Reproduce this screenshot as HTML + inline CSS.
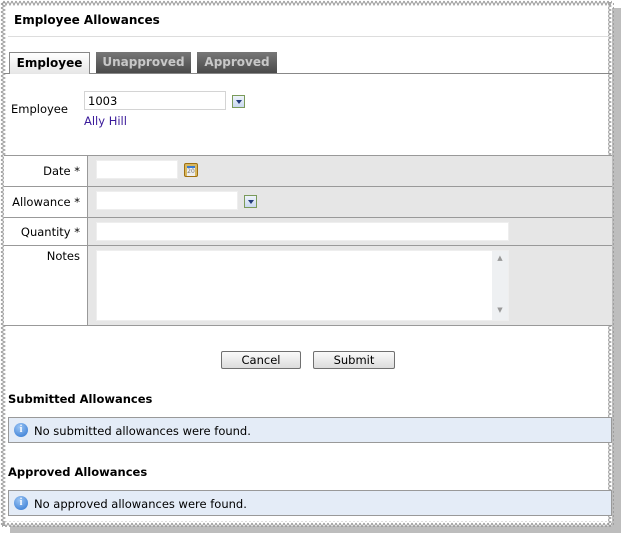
<!DOCTYPE html>
<html><head><style>
body{margin:0;width:631px;height:540px;background:#fff;position:relative;overflow:hidden;font-family:"DejaVu Sans","Liberation Sans",sans-serif;font-size:11px;color:#000}
.a{position:absolute}
.inp{position:absolute;background:#fff;border:1px solid #d4d4d4;box-sizing:border-box}
.dd{position:absolute;width:13px;height:13px;box-sizing:border-box;border:1px solid #7a9a5a;background:linear-gradient(#eef3fb,#c9d8f0)}
.dd:after{content:"";position:absolute;left:3px;top:4px;border-left:3px solid transparent;border-right:3px solid transparent;border-top:4px solid #223a7a}
.btn{position:absolute;height:18px;box-sizing:border-box;border:1px solid #707070;border-radius:2px;background:linear-gradient(#fafafa,#dcdcdc);text-align:center;line-height:16px;font-size:11.5px}
.tab{position:absolute;top:52px;height:21px;box-sizing:border-box;font-weight:bold;font-size:12px;line-height:21px;text-align:center}
.info{position:absolute;left:8px;width:604px;height:26px;box-sizing:border-box;border:1px solid #999;background:#e4ecf7}
.ic{position:absolute;left:5px;top:5px;width:14px;height:14px;border-radius:50%;background:radial-gradient(circle at 40% 30%,#9cc6f5,#2d74d0);color:#fff;font-weight:bold;font-size:10px;line-height:14px;text-align:center;font-family:"Liberation Serif",serif}
</style></head><body>
<svg class="a" style="left:0;top:0" width="631" height="540">
<defs>
<pattern id="zv" width="6" height="4" patternUnits="userSpaceOnUse"><polyline points="1,0 5,2 1,4" fill="none" stroke="#999" stroke-width="1"/></pattern>
<pattern id="zh" width="4" height="6" patternUnits="userSpaceOnUse"><polyline points="0,1 2,5 4,1" fill="none" stroke="#999" stroke-width="1"/></pattern>
</defs>
<rect x="612" y="8" width="9" height="525" fill="#bdbdbd"/>
<rect x="10" y="524" width="611" height="9" fill="#bdbdbd"/>
<rect x="3" y="3" width="609" height="523" fill="#fff"/>
<rect x="0" y="2" width="6" height="524" fill="url(#zv)"/>
<rect x="608" y="2" width="6" height="524" fill="url(#zv)"/>
<rect x="2" y="0" width="610" height="6" fill="url(#zh)"/>
<rect x="2" y="521" width="610" height="6" fill="url(#zh)"/>
</svg>
<div class="a" style="left:8px;top:8px;width:604px;height:28px;border-bottom:1px solid #ddd"></div>
<div class="a" style="left:14px;top:13px;font-weight:bold;font-size:12px">Employee Allowances</div>

<div class="a" style="left:4px;top:73px;width:608px;border-top:1px solid #888"></div>
<div class="tab" style="left:9px;width:81px;height:22px;background:linear-gradient(#fff,#e6e6e6);border:1px solid #888;border-bottom:none">Employee</div>
<div class="tab" style="left:96px;width:95px;background:linear-gradient(#777,#4a4a4a);color:#c8c8c8">Unapproved</div>
<div class="tab" style="left:197px;width:80px;background:linear-gradient(#777,#4a4a4a);color:#c8c8c8">Approved</div>

<div class="a" style="left:11px;top:102px;font-size:11.5px">Employee</div>
<div class="inp" style="left:84px;top:91px;width:142px;height:19px;padding:2px 3px;font-size:11.5px">1003</div>
<div class="dd" style="left:232px;top:95px"></div>
<div class="a" style="left:84px;top:114px;color:#3a1a9a;font-size:11.5px">Ally Hill</div>

<div class="a" style="left:4px;top:155px;width:608px;height:171px;background:#e6e6e6;border-top:1px solid #999;border-bottom:1px solid #999;box-sizing:border-box"></div>
<div class="a" style="left:4px;top:156px;width:83px;height:169px;background:#fff;border-right:1px solid #999"></div>
<div class="a" style="left:4px;top:186px;width:608px;border-top:1px solid #999"></div>
<div class="a" style="left:4px;top:217px;width:608px;border-top:1px solid #999"></div>
<div class="a" style="left:4px;top:245px;width:608px;border-top:1px solid #999"></div>
<div class="a" style="left:0;top:164px;width:80px;text-align:right;font-size:11.5px">Date *</div>
<div class="a" style="left:0;top:195px;width:80px;text-align:right;font-size:11.5px">Allowance *</div>
<div class="a" style="left:0;top:225px;width:80px;text-align:right;font-size:11.5px">Quantity *</div>
<div class="a" style="left:0;top:249px;width:80px;text-align:right;font-size:11.5px">Notes</div>
<div class="inp" style="left:96px;top:160px;width:82px;height:19px;border-color:#eee"></div>
<div class="a" style="left:184px;top:163px;width:14px;height:14px;box-sizing:border-box;border:1px solid #a07010;background:#d8b860;border-radius:2px"><div style="position:absolute;left:2px;top:2px;width:8px;height:8px;background:#eee;border-top:2px solid #3a7ad0;font-size:6px;line-height:7px;text-align:center;color:#777">20</div></div>
<div class="inp" style="left:96px;top:191px;width:142px;height:19px;border-color:#eee"></div>
<div class="dd" style="left:244px;top:195px"></div>
<div class="inp" style="left:96px;top:222px;width:413px;height:19px;border-color:#eee"></div>
<div class="inp" style="left:96px;top:250px;width:413px;height:71px;border-color:#eee"></div>
<div class="a" style="left:492px;top:251px;width:16px;height:69px;background:#eef0f2;color:#999;font-size:7px;text-align:center"><div style="margin-top:3px">▲</div><div style="margin-top:44px">▼</div></div>

<div class="btn" style="left:221px;top:351px;width:80px">Cancel</div>
<div class="btn" style="left:313px;top:351px;width:82px">Submit</div>

<div class="a" style="left:8px;top:392px;font-weight:bold;font-size:11.5px">Submitted Allowances</div>
<div class="info" style="top:417px"><div class="ic">i</div><div class="a" style="left:25px;top:6px;font-size:11.5px">No submitted allowances were found.</div></div>
<div class="a" style="left:8px;top:465px;font-weight:bold;font-size:11.5px">Approved Allowances</div>
<div class="info" style="top:490px"><div class="ic">i</div><div class="a" style="left:25px;top:6px;font-size:11.5px">No approved allowances were found.</div></div>
</body></html>
